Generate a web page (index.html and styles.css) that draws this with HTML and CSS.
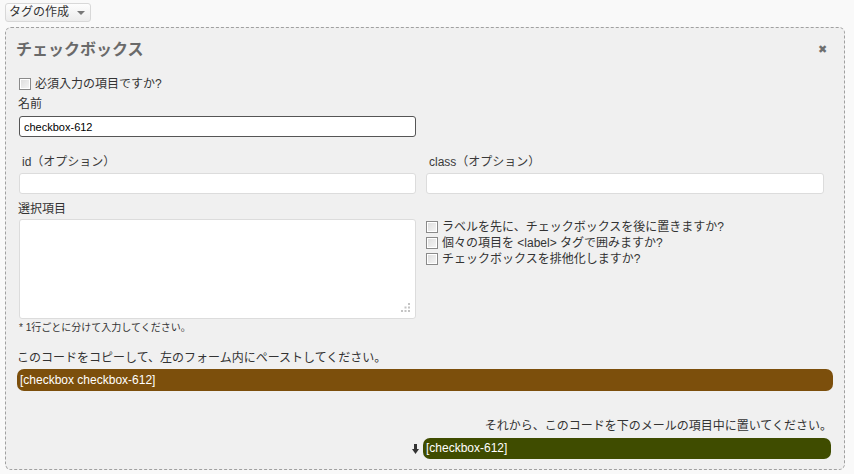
FILE: index.html
```html
<!DOCTYPE html>
<html>
  <head>
    <meta charset="utf-8" />
    <title>タグの作成</title>
    <link rel="stylesheet" href="styles.css">
  </head>
  <body>
    <div class="toolbar">
      <button class="tagbtn">タグの作成 <span class="caret"></span></button>
    </div>
    <div class="panel">
      <div class="panel-head">
        <h2 class="panel-title">チェックボックス</h2>
        <span class="close">&#x2716;</span>
      </div>

      <label class="check-row">
        <span class="cbox"></span>必須入力の項目ですか?
      </label>

      <div class="field-label">名前</div>
      <div class="half">
        <input type="text" class="txt focus" value="checkbox-612" />
      </div>

      <div class="two-col opt-labels">
        <span>id（オプション）</span>
        <span>class（オプション）</span>
      </div>
      <div class="two-col">
        <input type="text" class="txt" />
        <input type="text" class="txt" />
      </div>

      <div class="field-label choice-label">選択項目</div>
      <div class="two-col choices">
        <div class="area-wrap">
          <textarea class="area"></textarea>
          <svg class="grip" width="10" height="10" viewBox="0 0 10 10">
            <rect x="7" y="0" width="2" height="2" fill="#c4c4c4" />
            <rect x="3.5" y="3.5" width="2" height="2" fill="#c4c4c4" />
            <rect x="7" y="3.5" width="2" height="2" fill="#c4c4c4" />
            <rect x="0" y="7" width="2" height="2" fill="#c4c4c4" />
            <rect x="3.5" y="7" width="2" height="2" fill="#c4c4c4" />
            <rect x="7" y="7" width="2" height="2" fill="#c4c4c4" />
          </svg>
        </div>
        <div class="opt-list">
          <label class="opt"><span class="cbox"></span>ラベルを先に、チェックボックスを後に置きますか?</label>
          <label class="opt"><span class="cbox"></span>個々の項目を &lt;label&gt; タグで囲みますか?</label>
          <label class="opt"><span class="cbox"></span>チェックボックスを排他化しますか?</label>
        </div>
      </div>
      <div class="note">* 1行ごとに分けて入力してください。</div>

      <div class="copy-text">このコードをコピーして、左のフォーム内にペーストしてください。</div>
      <div class="code-bar brown">[checkbox checkbox-612]</div>

      <div class="mail-text">それから、このコードを下のメールの項目中に置いてください。</div>
      <div class="mail-row">
        <svg class="down" width="7" height="10" viewBox="0 0 7 10">
          <rect x="2" y="0" width="3" height="6" fill="#333" />
          <polygon points="0,5 7,5 3.5,10" fill="#333" />
        </svg>
        <div class="code-bar green">[checkbox-612]</div>
      </div>
    </div>
  </body>
</html>
```

FILE: styles.css
```css
* {
  margin: 0;
  padding: 0;
  box-sizing: border-box;
}
body {
  margin: 3px 9px 0 5px;
  background: #f9f9f9;
  font-family: "Liberation Sans", "Noto Sans CJK JP", sans-serif;
  font-size: 12px;
  color: #333;
}
.toolbar {
  height: 19px;
}
.tagbtn {
  height: 19px;
  width: 86px;
  padding: 0 0 0 3px;
  text-align: left;
  font-family: inherit;
  font-size: 12px;
  line-height: 17px;
  color: #333;
  border: 1px solid #d8d8d8;
  border-radius: 3px;
  background: linear-gradient(#fdfdfd, #ececec);
}
.caret {
  display: inline-block;
  margin-left: 5px;
  vertical-align: middle;
  border-left: 4px solid transparent;
  border-right: 4px solid transparent;
  border-top: 4px solid #777;
}
.panel {
  margin-top: 5px;
  width: 840px;
  height: 443px;
  border: 1px dashed #a0a0a0;
  border-radius: 6px;
  background: #f0f0f0;
  padding: 8px 20px 10px 13px;
}
.panel-head {
  display: flex;
  justify-content: space-between;
  align-items: center;
  height: 24px;
  margin-left: -3px;
}
.panel-title {
  font-size: 16px;
  font-weight: bold;
  color: #6a6a6a;
}
.close {
  font-size: 11px;
  color: #6f6f6f;
  margin-right: -3px;
  margin-top: 2px;
}
.check-row {
  display: flex;
  align-items: center;
  margin-top: 16px;
  line-height: 16px;
  height: 16px;
}
.cbox {
  display: inline-block;
  width: 12px;
  height: 12px;
  margin-right: 4px;
  border: 1px solid #8a8a8a;
  box-shadow: inset 0 0 0 1px #fff;
  background: linear-gradient(135deg, #dcdcdc, #f6f6f6);
  flex-shrink: 0;
}
.field-label {
  margin-top: 4px;
  line-height: 16px;
  margin-left: -1px;
}
.half {
  width: 397px;
  margin-top: 4px;
}
.txt {
  display: block;
  width: 100%;
  height: 21px;
  border: 1px solid #dcdcdc;
  border-radius: 3px;
  background: #fff;
  font-family: inherit;
  font-size: 11px;
  color: #000;
  padding: 0 4px;
  outline: none;
}
.txt.focus {
  border-color: #555;
}
.two-col {
  display: grid;
  grid-template-columns: 397px 398px;
  column-gap: 10px;
  margin-top: 3px;
}
.opt-labels {
  margin-top: 17px;
  font-size: 12px;
  line-height: 16px;
  color: #3a3a3a;
}
.opt-labels span {
  padding-left: 3px;
}
.choice-label {
  margin-top: 7px;
}
.choices {
  margin-top: 2px;
}
.area-wrap {
  position: relative;
  height: 100px;
}
.area {
  display: block;
  width: 100%;
  height: 100px;
  border: 1px solid #dcdcdc;
  border-radius: 3px;
  background: #fff;
  resize: none;
  outline: none;
}
.grip {
  position: absolute;
  right: 5px;
  bottom: 6px;
}
.opt-list {
  display: flex;
  flex-direction: column;
}
.opt {
  display: flex;
  align-items: center;
  height: 16px;
  line-height: 16px;
}
.note {
  margin-top: 1px;
  font-size: 10px;
  line-height: 16px;
  color: #333;
}
.copy-text {
  margin-top: 14px;
  line-height: 16px;
  margin-left: -2px;
}
.code-bar {
  height: 22px;
  line-height: 22px;
  border-radius: 7px;
  color: #fff;
  padding-left: 3px;
  font-size: 12px;
}
.brown {
  margin: 3px -9px 0 -2px;
  background: #7c4f0c;
}
.mail-text {
  margin-top: 27px;
  margin-right: -8px;
  line-height: 16px;
  text-align: right;
}
.mail-row {
  display: flex;
  align-items: center;
  justify-content: flex-end;
  margin-top: 4px;
  margin-right: -7px;
}
.down {
  margin-right: 4px;
}
.green {
  width: 408px;
  height: 21px;
  line-height: 21px;
  background: #3f4c00;
}
```
